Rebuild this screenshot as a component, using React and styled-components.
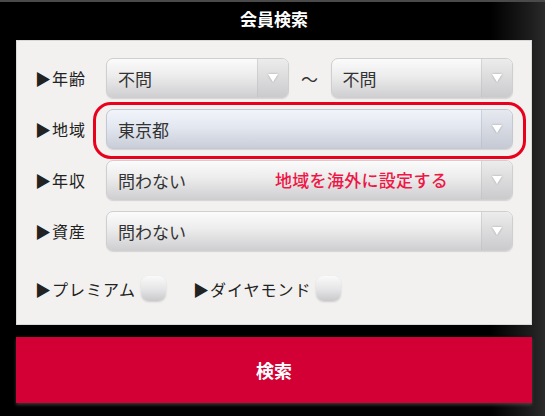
import React from 'react';
import styled, { createGlobalStyle } from 'styled-components';

const GlobalStyle = createGlobalStyle`
  html, body {
    margin: 0;
    padding: 0;
    background: #000;
  }
  * { box-sizing: border-box; }
`;

const rows = [
  { label: '年齢', range: true },
  { label: '地域', value: '東京都', highlight: true },
  { label: '年収', value: '問わない', note: '地域を海外に設定する' },
  { label: '資産', value: '問わない' },
];

const Select = ({ value, tint }) => (
  <SelectBox tint={tint}>
    <SelectText>{value}</SelectText>
    <ArrowCell tint={tint}>
      <Arrow />
    </ArrowCell>
  </SelectBox>
);

const App = () => {
  return (
    <Page>
      <GlobalStyle />
      <TitleBar>会員検索</TitleBar>
      <Panel>
        {rows.map((row) => (
          <Row key={row.label}>
            <Label>▶{row.label}</Label>
            {row.range ? (
              <Range>
                <Select value='不問' />
                <Tilde>〜</Tilde>
                <Select value='不問' />
              </Range>
            ) : (
              <Select value={row.value} tint={row.highlight} />
            )}
            {row.highlight && <Highlight />}
            {row.note && <Note>{row.note}</Note>}
          </Row>
        ))}
        <CheckRow>
          <CheckItem>
            ▶プレミアム<CheckBox />
          </CheckItem>
          <CheckItem>
            ▶ダイヤモンド<CheckBox />
          </CheckItem>
        </CheckRow>
      </Panel>
      <SearchButton>検索</SearchButton>
    </Page>
  );
};

export default App;

const Page = styled.div`
width:545px;
height:416px;
overflow:hidden;
display:flex;
flex-direction:column;
padding:0 13px 0 16px;
background:linear-gradient(to right, #000 0, #000 90%, #1c1c1c 97%, #2a2a2a 100%);
border-top:2px solid #4a4a4a;
font-family:"Noto Sans CJK JP", "Noto Sans", sans-serif;
`;

const TitleBar = styled.div`
height:38px;
display:flex;
align-items:center;
justify-content:center;
color:#fff;
font-size:17px;
font-weight:700;
padding-bottom:5px;
`;

const Panel = styled.div`
height:285px;
background:#f2f1ef;
border:1px solid #d8d8d8;
padding:17px 18px 0 18px;
display:flex;
flex-direction:column;
gap:11px;
`;

const Row = styled.div`
position:relative;
display:flex;
align-items:center;
height:40px;
`;

const Label = styled.div`
width:71px;
flex-shrink:0;
font-size:16px;
color:#222;
letter-spacing:1px;
`;

const Range = styled.div`
flex:1;
display:flex;
align-items:center;
> div:first-child, > div:last-child { flex:1; }
`;

const Tilde = styled.div`
width:42px;
text-align:center;
font-size:17px;
color:#333;
`;

const SelectBox = styled.div`
flex:1;
height:40px;
display:flex;
border-radius:7px;
border:1px solid ${p => p.tint ? '#c4c8d2' : '#cfcfcf'};
background:${p => p.tint
  ? 'linear-gradient(to bottom, #f1f4fa 0%, #e3e7f0 45%, #c9cdd7 100%)'
  : 'linear-gradient(to bottom, #fbfbfb 0%, #ececec 45%, #cfcfd2 100%)'};
box-shadow:0 1px 1px rgba(0,0,0,0.12);
overflow:hidden;
`;

const SelectText = styled.div`
flex:1;
display:flex;
align-items:center;
padding-left:11px;
font-size:17px;
color:#333;
`;

const ArrowCell = styled.div`
width:31px;
display:flex;
align-items:center;
justify-content:center;
border-left:1px solid ${p => p.tint ? 'rgba(180,185,198,0.5)' : 'rgba(190,190,190,0.5)'};
background:${p => p.tint
  ? 'linear-gradient(to bottom, #e6e9f0, #c6cad4)'
  : 'linear-gradient(to bottom, #ececec, #cbcbce)'};
`;

const Arrow = styled.div`
width:0;
height:0;
border-left:5px solid transparent;
border-right:5px solid transparent;
border-top:8px solid #fff;
filter:drop-shadow(0 0 1px rgba(0,0,0,0.25));
`;

const Highlight = styled.div`
position:absolute;
left:58px;
right:-13px;
top:-7px;
bottom:-10px;
border:3px solid #e8001c;
border-radius:18px;
pointer-events:none;
`;

const Note = styled.div`
position:absolute;
left:240px;
top:7px;
font-size:17px;
font-weight:500;
color:#ee1746;
letter-spacing:0.3px;
`;

const CheckRow = styled.div`
display:flex;
align-items:center;
gap:27px;
margin-top:14px;
`;

const CheckItem = styled.div`
display:flex;
align-items:center;
font-size:16px;
color:#222;
letter-spacing:1px;
`;

const CheckBox = styled.span`
display:inline-block;
width:25px;
height:25px;
margin-left:5px;
border-radius:8px;
background:linear-gradient(to bottom, #fafafa 0%, #e4e4e6 55%, #c9c9cc 100%);
box-shadow:0 1px 2px rgba(0,0,0,0.15);
`;

const SearchButton = styled.div`
margin-top:12px;
height:66px;
display:flex;
align-items:center;
justify-content:center;
background:#d30036;
color:#fff;
font-size:18px;
font-weight:700;
box-shadow:0 2px 3px rgba(90,90,90,0.6);
`;
